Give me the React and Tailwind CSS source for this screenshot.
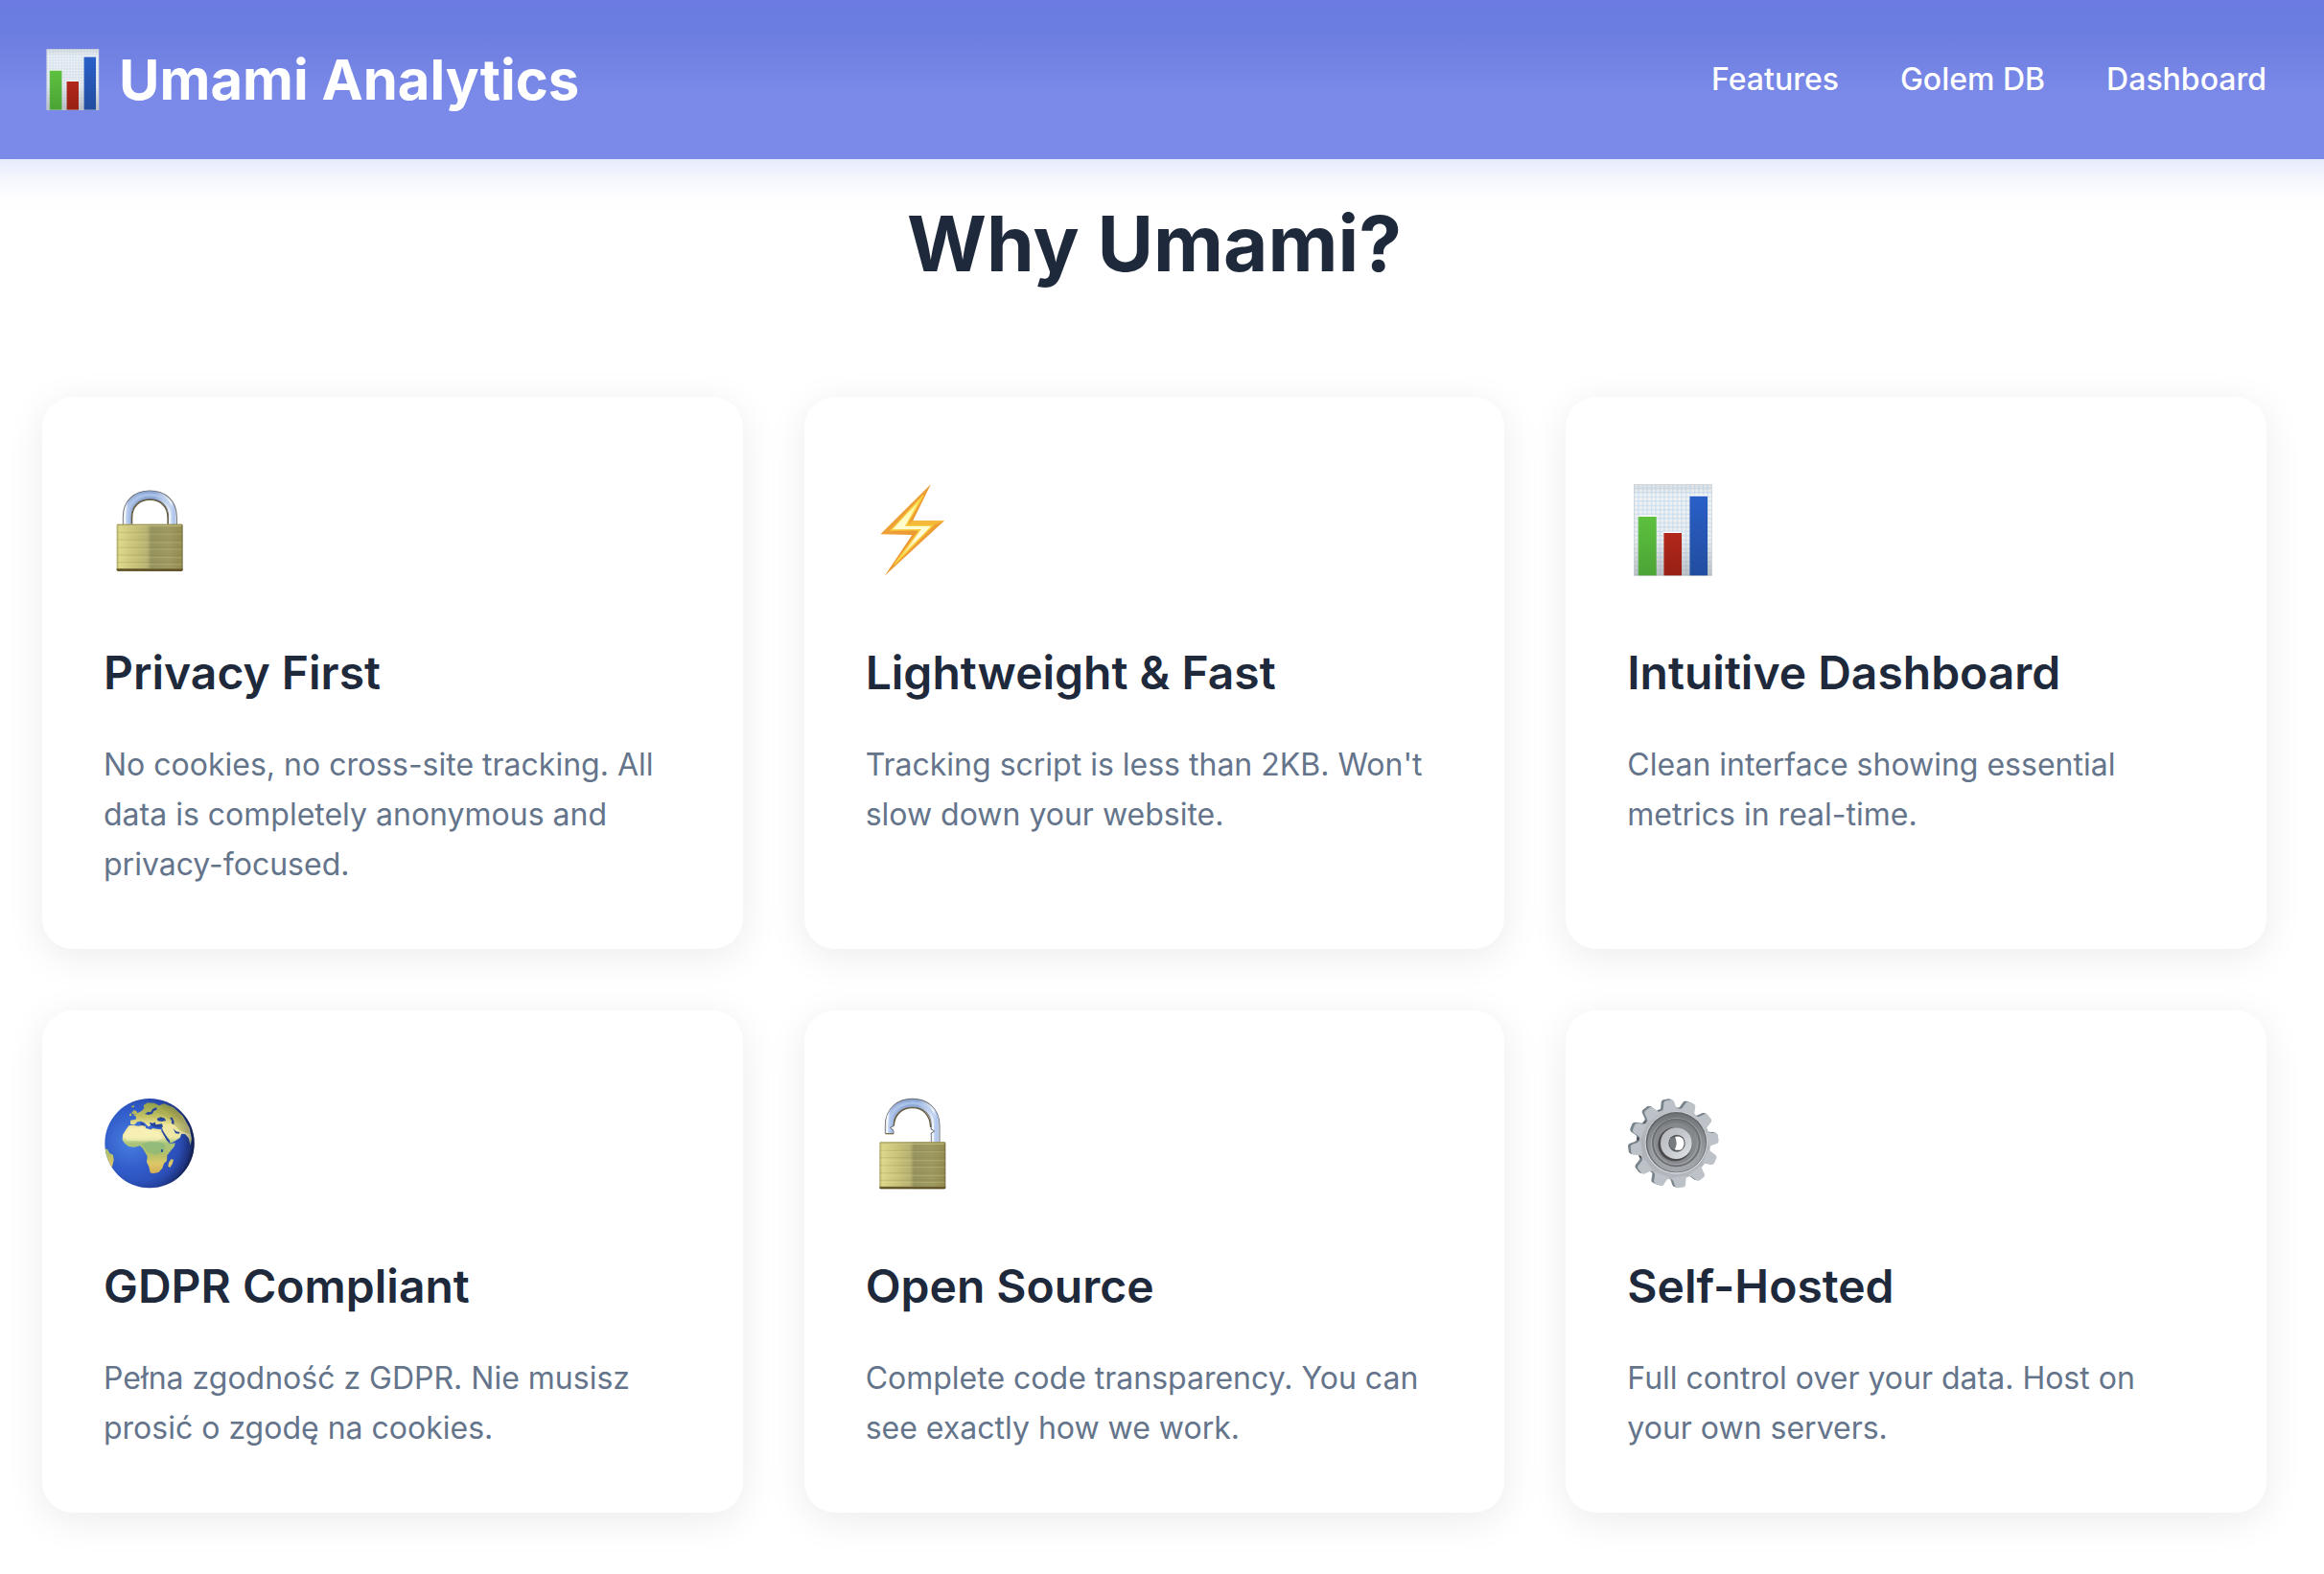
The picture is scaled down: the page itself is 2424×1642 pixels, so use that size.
import React from "react";

function ChartIcon({ id, className }) {
  return (
    <svg viewBox="22 45 288 288" className={className} aria-hidden="true">
      <defs>
        <pattern id={`${id}-grid`} x="56" y="56" width="13.5" height="13.5" patternUnits="userSpaceOnUse">
          <rect width="13.5" height="13.5" fill="#f3f3f3" />
          <path d="M0 2H13.5" stroke="#c3dcf0" strokeWidth="4" opacity=".75" />
          <path d="M2 0V13.5" stroke="#c3dcf0" strokeWidth="4" opacity=".75" />
        </pattern>
        <linearGradient id={`${id}-green`} x1="0" y1="0" x2="0" y2="1">
          <stop offset="0" stopColor="#5dc03f" />
          <stop offset="1" stopColor="#4ba435" />
        </linearGradient>
        <linearGradient id={`${id}-red`} x1="0" y1="0" x2="0" y2="1">
          <stop offset="0" stopColor="#b3271b" />
          <stop offset="1" stopColor="#972015" />
        </linearGradient>
        <linearGradient id={`${id}-blue`} x1="0" y1="0" x2="0" y2="1">
          <stop offset="0" stopColor="#2a5fc8" />
          <stop offset="1" stopColor="#214d9f" />
        </linearGradient>
        <linearGradient id={`${id}-shade`} x1="0" y1="0" x2="0" y2="1">
          <stop offset="0" stopColor="#8a8f96" stopOpacity=".2" />
          <stop offset=".12" stopColor="#8a8f96" stopOpacity="0" />
          <stop offset=".6" stopColor="#8a8f96" stopOpacity=".05" />
          <stop offset="1" stopColor="#8a8f96" stopOpacity=".5" />
        </linearGradient>
      </defs>
      <rect x="43" y="46" width="245" height="286" fill={`url(#${id}-grid)`} />
      <rect x="43" y="46" width="245" height="286" fill={`url(#${id}-shade)`} />
      <rect x="44" y="47" width="243" height="284" fill="none" stroke="#cfd2d5" strokeWidth="2" />
      <rect x="57" y="143" width="57" height="5" fill="#fff" />
      <rect x="57" y="147" width="57" height="184" fill={`url(#${id}-green)`} />
      <rect x="137" y="194" width="56" height="5" fill="#fff" />
      <rect x="137" y="198" width="56" height="133" fill={`url(#${id}-red)`} />
      <rect x="218" y="79" width="56" height="5" fill="#fff" />
      <rect x="218" y="83" width="56" height="248" fill={`url(#${id}-blue)`} />
      <path d="M58 147V331M138 198V331M219 83V331" stroke="#fff" strokeOpacity=".22" strokeWidth="2" />
    </svg>
  );
}

function LockBody({ id, x, y }) {
  return (
    <g>
      <defs>
        <linearGradient id={`${id}-brass`} x1="0" y1="0" x2="1" y2="0">
          <stop offset="0" stopColor="#aba562" />
          <stop offset=".04" stopColor="#dcd789" />
          <stop offset=".3" stopColor="#c5bf78" />
          <stop offset=".46" stopColor="#b8b272" />
          <stop offset=".52" stopColor="#97935f" />
          <stop offset=".8" stopColor="#9d9961" />
          <stop offset=".97" stopColor="#958d52" />
          <stop offset="1" stopColor="#6f6736" />
        </linearGradient>
        <linearGradient id={`${id}-edge`} x1="0" y1="0" x2="0" y2="1">
          <stop offset="0" stopColor="#7d7442" />
          <stop offset="1" stopColor="#4a3812" />
        </linearGradient>
      </defs>
      <rect x={x} y={y} width="207" height="147" rx="4" fill={`url(#${id}-brass)`} />
      <g transform={`translate(${x} ${y})`}>
        <path d="M2 2H205" stroke="#9c955a" strokeWidth="3" />
        <path d="M4 6H203" stroke="#d0cb88" strokeWidth="4" opacity=".6" />
        <path d="M2 27H205M2 49H205M2 74H205M2 97H205M2 120H205" stroke="#7e7843" strokeWidth="2" opacity=".3" />
        <path d="M2 31H205M2 58H205M2 79H205M2 105H205M2 126H205" stroke="#efeaa6" strokeWidth="3" opacity=".22" />
        <path d="M0 139H207V143Q207 147 203 147H4Q0 147 0 143Z" fill={`url(#${id}-edge)`} />
      </g>
    </g>
  );
}

function Shackle({ id, d, left, right }) {
  return (
    <g fill="none">
      <defs>
        <linearGradient id={`${id}-steel`} x1={left} y1="0" x2={right} y2="0" gradientUnits="userSpaceOnUse">
          <stop offset="0" stopColor="#d6d9df" />
          <stop offset=".05" stopColor="#fbfcfe" />
          <stop offset=".1" stopColor="#a9c1ea" />
          <stop offset=".15" stopColor="#a3b8de" />
          <stop offset=".4" stopColor="#8ea9d6" />
          <stop offset=".6" stopColor="#8ea9d6" />
          <stop offset=".84" stopColor="#dde5f4" />
          <stop offset=".88" stopColor="#f3f6fb" />
          <stop offset=".94" stopColor="#abc3ec" />
          <stop offset="1" stopColor="#d5dbe6" />
        </linearGradient>
      </defs>
      <path d={d} stroke="#66686e" strokeWidth="29" />
      <path d={d} stroke={`url(#${id}-steel)`} strokeWidth="24" />
      <path d={d} stroke="#b4caf0" strokeWidth="9" opacity=".7" />
    </g>
  );
}

function LockIcon({ className }) {
  return (
    <svg viewBox="24 45 288 288" className={className} aria-hidden="true">
      <Shackle id="closed" left="84" right="254" d="M98 172V148C98 104 128 79 169 79S240 104 240 148V172" />
      <path d="M113 170V150C113 116 135 94 169 94S225 116 225 150V170" fill="none" stroke="#655a3c" strokeWidth="4" />
      <LockBody id="closed" x="65" y="170" />
    </svg>
  );
}

function OpenLockIcon({ className }) {
  return (
    <svg viewBox="8 45 288 288" className={className} aria-hidden="true">
      <Shackle id="open" left="68" right="240" d="M82 158V132C82 87 114 62 154 62S226 87 226 132V186" />
      <path d="M96 134C97 98 122 77 154 77S209 98 211 138" fill="none" stroke="#655a3c" strokeWidth="4" />
      <path d="M100 131L84 139L98 150V131Z" fill="#fff" />
      <path d="M97 133L84 139L95 148" fill="none" stroke="#65666a" strokeWidth="3" />
      <path d="M208 142L222 150L208 160Z" fill="#fff" />
      <path d="M211 143L223 150L211 158" fill="none" stroke="#65666a" strokeWidth="3" />
      <path d="M70 158H95" stroke="#79704a" strokeWidth="4" />
      <LockBody id="open" x="51" y="184" />
    </svg>
  );
}

function BoltIcon({ className }) {
  return (
    <svg viewBox="8 45 288 288" className={className} aria-hidden="true">
      <defs>
        <linearGradient id="bolt-edge" x1="0" y1="0" x2="1" y2="1">
          <stop offset="0" stopColor="#f3a83c" />
          <stop offset=".5" stopColor="#ec9a33" />
          <stop offset="1" stopColor="#f2a53a" />
        </linearGradient>
        <linearGradient id="bolt-core" x1="0" y1="0" x2="0" y2="1">
          <stop offset="0" stopColor="#fde94f" />
          <stop offset=".3" stopColor="#fffcc0" />
          <stop offset=".6" stopColor="#fffde0" />
          <stop offset="1" stopColor="#fbd23f" />
        </linearGradient>
      </defs>
      <path d="M212 45L54 202L153 204L67 332L254 160L156 159Z" fill="url(#bolt-edge)" />
      <path d="M156 159L134 174L219 174L254 160Z" fill="#f5b93a" />
      <path
        d="M188 80L87 189L178 188L98 296L217 175L134 175Z"
        fill="url(#bolt-core)"
        stroke="#f8cf3e"
        strokeWidth="4"
      />
    </svg>
  );
}

function GlobeIcon({ className }) {
  return (
    <svg viewBox="24 45 288 288" className={className} aria-hidden="true">
      <defs>
        <radialGradient id="sea" cx="110" cy="180" r="200" gradientUnits="userSpaceOnUse">
          <stop offset="0" stopColor="#4a80e0" />
          <stop offset=".45" stopColor="#315dca" />
          <stop offset=".8" stopColor="#2a4cb4" />
          <stop offset="1" stopColor="#1d2f7a" />
        </radialGradient>
        <linearGradient id="land" x1="0" y1="60" x2="0" y2="285" gradientUnits="userSpaceOnUse">
          <stop offset="0" stopColor="#8fa04c" />
          <stop offset=".2" stopColor="#c4c263" />
          <stop offset=".32" stopColor="#efe6a0" />
          <stop offset=".48" stopColor="#eee9a6" />
          <stop offset=".57" stopColor="#a9c47c" />
          <stop offset=".72" stopColor="#b2c069" />
          <stop offset=".85" stopColor="#ddc768" />
          <stop offset="1" stopColor="#d3ad55" />
        </linearGradient>
        <radialGradient id="globe-shade" cx="140" cy="184" r="172" gradientUnits="userSpaceOnUse">
          <stop offset=".7" stopColor="#0a1230" stopOpacity="0" />
          <stop offset=".9" stopColor="#0a1230" stopOpacity=".22" />
          <stop offset="1" stopColor="#060a1c" stopOpacity=".7" />
        </radialGradient>
        <clipPath id="globe-clip">
          <circle cx="168" cy="188" r="140" />
        </clipPath>
      </defs>
      <circle cx="168" cy="188" r="140" fill="url(#sea)" />
      <g clipPath="url(#globe-clip)">
        <g fill="url(#land)">
          <path d="M103 133L116 131L132 134L146 132L155 134L156 141L171 146L178 141L190 143L205 145L212 158L222 178L231 190L248 187L246 197L231 215L223 226L222 243L213 251L208 266L196 279L179 283L170 280L166 262L159 247L161 229L152 213L146 203L138 196L120 200L103 198L91 189L83 178L84 161L93 147Z" />
          <path d="M108 116L125 113L126 104L118 101L131 93L143 87L151 79L149 69L162 61L183 62L198 70L213 64L243 76L272 103L293 140L300 174L296 194L290 172L280 160L268 158L263 171L248 181L233 188L222 170L211 151L206 137L190 137L186 129L175 129L168 122L171 133L164 136L151 123L140 119L130 121L121 130L108 128Z" />
          <path d="M112 92L119 84L127 87L131 95L119 98ZM105 97L111 94L112 101L105 103ZM111 72L120 69L120 75L112 76Z" />
          <path d="M236 237L243 240L239 253L232 264L226 260L228 248Z" />
          <path d="M24 202L37 208L43 219L54 224L56 240L51 262L43 266L30 240Z" />
        </g>
        <path d="M143 190L170 183L205 185L217 195L213 214L186 224L160 214Z" fill="#79b37d" opacity=".5" />
        <path d="M86 165L104 140L146 138L196 151L209 171L194 180L150 181L97 180Z" fill="#fff7c4" opacity=".5" />
        <path d="M206 68L246 82L286 130L294 160L262 148L220 105L190 92Z" fill="#a3a548" opacity=".45" />
        <g fill="#28469c">
          <path d="M191 111L202 106L214 109L220 117L206 120L194 118ZM231 107L239 107L245 120L244 130L236 125L238 118ZM242 142L251 151L263 154L260 158L249 157Z" />
          <path d="M168 122L177 125L186 122L187 130L207 127L210 137L190 139L176 135ZM203 146L209 149L232 181L231 187L222 179Z" />
          <path d="M204 208L210 207L209 216L204 215ZM164 89L171 91L178 80L190 75L191 83L181 87L177 96L164 99L153 96Z" />
          <path d="M142 121L151 128L154 135L140 129Z" />
        </g>
        <path d="M83 62Q102 53 125 52L103 61L80 72Z" fill="#c7cccf" opacity=".8" />
      </g>
      <circle cx="168" cy="188" r="140" fill="url(#globe-shade)" />
    </svg>
  );
}

const TEETH = [0, 30, 60, 90, 120, 150, 180, 210, 240, 270, 300, 330];

function GearShape({ cx, cy, fill }) {
  return (
    <g fill={fill}>
      <circle cx={cx} cy={cy} r="112" />
      {TEETH.map((angle) => (
        <path
          key={angle}
          transform={`rotate(${angle - 8} ${cx} ${cy}) translate(${cx} ${cy})`}
          d="M-25 -104Q-19 -112 -17 -126Q-16 -137 -8 -138H9Q17 -137 18 -126Q20 -112 26 -104Z"
        />
      ))}
    </g>
  );
}

function GearIcon({ className }) {
  return (
    <svg viewBox="22 45 288 288" className={className} aria-hidden="true">
      <defs>
        <linearGradient id="gear-face" x1="0" y1="45" x2="0" y2="333" gradientUnits="userSpaceOnUse">
          <stop offset="0" stopColor="#bcc2c7" />
          <stop offset=".5" stopColor="#aeb2b8" />
          <stop offset="1" stopColor="#b4b7bf" />
        </linearGradient>
        <linearGradient id="gear-side" x1="0" y1="45" x2="0" y2="333" gradientUnits="userSpaceOnUse">
          <stop offset="0" stopColor="#77838a" />
          <stop offset=".5" stopColor="#454a4f" />
          <stop offset="1" stopColor="#63524d" />
        </linearGradient>
        <linearGradient id="gear-dish" x1="0" y1="0" x2="0" y2="1">
          <stop offset="0" stopColor="#717477" />
          <stop offset=".5" stopColor="#8f9296" />
          <stop offset="1" stopColor="#a5a8ac" />
        </linearGradient>
        <linearGradient id="gear-hub" x1="0" y1="0" x2="1" y2="1">
          <stop offset="0" stopColor="#b3b6ba" />
          <stop offset=".55" stopColor="#c9ccd0" />
          <stop offset="1" stopColor="#e2e4e7" />
        </linearGradient>
      </defs>
      <GearShape cx="163" cy="187" fill="url(#gear-side)" />
      <GearShape cx="167" cy="188" fill="url(#gear-side)" />
      <GearShape cx="171" cy="190" fill="url(#gear-face)" />
      <circle cx="176" cy="186" r="98" fill="#d3d6da" />
      <circle cx="176" cy="185" r="95" fill="#66696d" />
      <circle cx="177" cy="187" r="91" fill="url(#gear-dish)" />
      <circle cx="176" cy="188" r="78" fill="none" stroke="#a6a9ad" strokeWidth="3" />
      <circle cx="176" cy="186" r="73" fill="none" stroke="#6b6d71" strokeWidth="5" />
      <circle cx="175" cy="188" r="64" fill="#85888c" />
      <ellipse cx="172" cy="191" rx="53" ry="53" fill="#4b4a4c" />
      <circle cx="176" cy="188" r="49" fill="url(#gear-hub)" />
      <ellipse cx="178" cy="188" rx="26" ry="27" fill="#55585b" />
      <path d="M157 175Q165 166 173 172Q180 188 172 206Q164 209 158 201Q152 188 157 175Z" fill="#777b7f" />
      <path d="M172 168Q190 163 199 178Q204 194 194 206Q184 212 171 208Q182 188 172 168Z" fill="#fff" />
    </svg>
  );
}

const NAV = ["Features", "Golem DB", "Dashboard"];

const FEATURES = [
  {
    icon: <LockIcon className="size-24" />,
    title: "Privacy First",
    text: "No cookies, no cross-site tracking. All data is completely anonymous and privacy-focused.",
  },
  {
    icon: <BoltIcon className="size-24" />,
    title: "Lightweight & Fast",
    text: "Tracking script is less than 2KB. Won't slow down your website.",
  },
  {
    icon: <ChartIcon id="card-chart" className="size-24" />,
    title: "Intuitive Dashboard",
    text: "Clean interface showing essential metrics in real-time.",
  },
  {
    icon: <GlobeIcon className="size-24" />,
    title: "GDPR Compliant",
    text: "Pełna zgodność z GDPR. Nie musisz prosić o zgodę na cookies.",
  },
  {
    icon: <OpenLockIcon className="size-24" />,
    title: "Open Source",
    text: "Complete code transparency. You can see exactly how we work.",
  },
  {
    icon: <GearIcon className="size-24" />,
    title: "Self-Hosted",
    text: "Full control over your data. Host on your own servers.",
  },
];

export default function App() {
  return (
    <div className="min-h-screen overflow-x-hidden bg-white font-['Inter',sans-serif] text-[#1e293b]">
      <header className="flex items-center justify-between bg-linear-to-b from-[#6b7be1] from-0% via-[#6c7de0] via-20% to-[#7b8ae8] to-60% py-9 pr-[60px] pl-11 text-white shadow-[0_-32px_40px_40px_rgba(102,126,234,0.25)]">
        <a href="#" className="flex items-center gap-4 text-[58px] leading-[94px] font-bold">
          <ChartIcon id="logo-chart" className="size-16" />
          Umami Analytics
        </a>
        <nav className="flex items-center gap-16">
          {NAV.map((item) => (
            <a key={item} href="#" className="text-[32px] leading-[52px] font-medium">
              {item}
            </a>
          ))}
        </nav>
      </header>
      <main className="pt-6 pr-[60px] pb-16 pl-11">
        <h2 className="mb-24 text-center text-[80px] leading-[128px] font-bold">Why Umami?</h2>
        <div className="grid grid-cols-3 gap-16">
          {FEATURES.map((feature) => (
            <article
              key={feature.title}
              className="rounded-[32px] bg-white px-16 pt-16 pb-[62px] shadow-[0_8px_40px_rgba(0,0,0,0.08)]"
            >
              <div className="mb-8 h-[153px] pt-[27px]">{feature.icon}</div>
              <h3 className="mb-8 text-[48px] leading-[77px] font-semibold">{feature.title}</h3>
              <p className="text-[32px] leading-[52px] text-[#64748b]">{feature.text}</p>
            </article>
          ))}
        </div>
      </main>
    </div>
  );
}
